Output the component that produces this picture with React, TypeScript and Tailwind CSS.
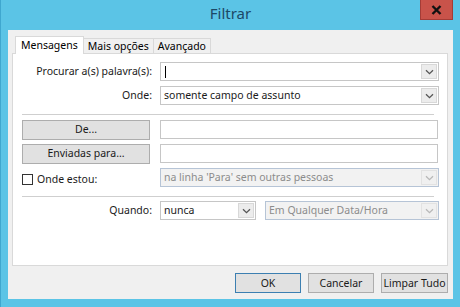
import React from "react";

function Chevron({ light }: { light?: boolean }) {
  return (
    <svg width="9" height="6" viewBox="0 0 9 6" className={light ? "text-[#b8b8b8]" : "text-[#555]"}>
      <path d="M1 1.2 L4.5 4.6 L8 1.2" fill="none" stroke="currentColor" strokeWidth="1.3" />
    </svg>
  );
}

function Select({
  value,
  width,
  disabled,
  caret,
}: {
  value: string;
  width: string;
  disabled?: boolean;
  caret?: boolean;
}) {
  return (
    <div
      className={`${width} h-[19px] flex items-center border ${
        disabled ? "border-[#b6c4d6] bg-[#f2f2f2] text-[#8c8c8c]" : "border-[#c6c6c6] bg-white text-[#1a1a1a]"
      }`}
    >
      <div className="flex-1 pl-[3px] flex items-center whitespace-nowrap overflow-hidden leading-[15px]">
        {caret && <span className="w-px h-[12px] bg-black ml-px" />}
        {value}
      </div>
      <div
        className={`w-[16px] h-[15px] mr-px flex items-center justify-center border ${
          disabled ? "border-[#e2e2e2] bg-[#f0f0f0]" : "border-[#d8d8d8] bg-[#ececec]"
        }`}
      >
        <Chevron light={disabled} />
      </div>
    </div>
  );
}

function Btn({ label, width, primary }: { label: string; width: string; primary?: boolean }) {
  return (
    <div
      className={`${width} h-[20px] flex items-center justify-center whitespace-nowrap bg-[#e1e1e1] border ${
        primary ? "border-[#3c7fb1]" : "border-[#adadad]"
      } text-[#1a1a1a]`}
    >
      {label}
    </div>
  );
}

export default function App() {
  return (
    <div
      className="w-[460px] h-[307px] bg-[#5bc4e6] flex flex-col border-l border-[#3fa7cf] text-[10.5px] leading-none"
      style={{ fontFamily: '"Noto Sans", "Open Sans", sans-serif' }}
    >
      {/* title bar */}
      <div className="h-[30px] flex items-start relative">
        <div className="flex-1 text-center pt-[6px] text-[15px] text-[#1c4866]">Filtrar</div>
        <div className="absolute right-[7px] top-0 w-[33px] h-[20px] bg-[#c9534a] border border-[#a43c36] border-t-0 flex items-center justify-center">
          <svg width="11" height="10" viewBox="0 0 11 10">
            <path d="M1.5 1 L9.5 9 M9.5 1 L1.5 9" stroke="#111" strokeWidth="2.4" />
          </svg>
        </div>
      </div>

      {/* client */}
      <div className="flex-1 mx-[7px] mb-[8px] bg-[#f0f0f0] flex flex-col">
        <div className="pl-[4px] pr-[5px] pt-[5px]">
          {/* tabs */}
          <div className="flex items-end h-[18px] pl-[3px]">
            <div className="h-[18px] px-[5px] flex items-center bg-white border border-b-0 border-[#d9d9d9] relative top-px z-10">
              Mensagens
            </div>
            <div className="h-[15px] px-[4px] flex items-center bg-[#f0f0f0] border border-l-0 border-b-0 border-[#d9d9d9]">
              Mais opções
            </div>
            <div className="h-[15px] px-[4px] flex items-center bg-[#f0f0f0] border border-l-0 border-b-0 border-[#d9d9d9]">
              Avançado
            </div>
          </div>

          {/* panel */}
          <div className="h-[213px] bg-white border border-[#d9d9d9] pl-[9px] pr-[7px] pt-[8px] flex flex-col text-[#1a1a1a]">
            <div className="flex items-center h-[19px]">
              <div className="w-[130px] text-right whitespace-nowrap">Procurar a(s) palavra(s):</div>
              <div className="ml-[8px]">
                <Select value="" width="w-[279px]" caret />
              </div>
            </div>
            <div className="flex items-center h-[19px] mt-[5px]">
              <div className="w-[130px] text-right">Onde:</div>
              <div className="ml-[8px]">
                <Select value="somente campo de assunto" width="w-[279px]" />
              </div>
            </div>

            <div className="mt-[9px] mr-[6px] border-t border-[#cfcfcf]" />

            <div className="flex items-center h-[19px] mt-[5px]">
              <Btn label="De..." width="w-[128px]" />
              <div className="ml-[10px] w-[278px] h-[19px] border border-[#c6c6c6] bg-white" />
            </div>
            <div className="flex items-center h-[19px] mt-[5px]">
              <Btn label="Enviadas para..." width="w-[128px]" />
              <div className="ml-[10px] w-[278px] h-[19px] border border-[#c6c6c6] bg-white" />
            </div>
            <div className="flex items-center h-[19px] mt-[5px]">
              <div className="w-[138px] flex items-center pt-[3px]">
                <div className="w-[11px] h-[11px] border border-[#333] bg-white" />
                <span className="ml-[4px]">Onde estou:</span>
              </div>
              <Select value="na linha 'Para' sem outras pessoas" width="w-[279px]" disabled />
            </div>

            <div className="mt-[9px] mr-[6px] border-t border-[#cfcfcf]" />

            <div className="flex items-center h-[19px] mt-[4px]">
              <div className="w-[130px] text-right">Quando:</div>
              <div className="ml-[8px] flex items-center">
                <Select value="nunca" width="w-[96px]" />
                <div className="ml-[9px]">
                  <Select value="Em Qualquer Data/Hora" width="w-[174px]" disabled />
                </div>
              </div>
            </div>
          </div>
        </div>

        {/* footer */}
        <div className="flex-1 flex items-center justify-end pr-[5px] gap-[7px] pt-px">
          <Btn label="OK" width="w-[66px]" primary />
          <Btn label="Cancelar" width="w-[66px]" />
          <Btn label="Limpar Tudo" width="w-[67px]" />
        </div>
      </div>
    </div>
  );
}
